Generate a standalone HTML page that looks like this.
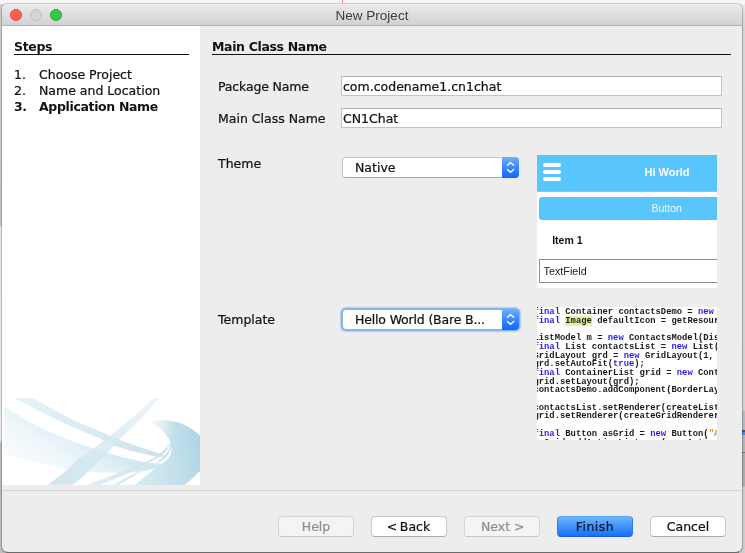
<!DOCTYPE html>
<html>
<head>
<meta charset="utf-8">
<title>New Project</title>
<style>
html,body{margin:0;padding:0;}
body{width:745px;height:553px;overflow:hidden;background:#f4f4f4;position:relative;
  font-family:"DejaVu Sans","Liberation Sans",sans-serif;font-size:12.5px;color:#111;}
.abs{position:absolute;}
#bgL{left:0;top:4px;width:6px;height:549px;background:linear-gradient(#d2d2d2 0,#cdcdcd 221px,#efefef 224px,#f0f0f0 436px,#c2c2c2 440px,#c2c2c2 100%);}
#bgR{left:739px;top:4px;width:6px;height:549px;background:linear-gradient(#ececec 0,#dadada 20px,#d6d6d6 406px,#b9bdc6 408px,#b9bdc6 426px,#555 426px,#555 428px,#4a8fe0 428px,#4a8fe0 431px,#b8b8b8 431px,#b8b8b8 448px,#777 448px,#777 449px,#b0b0b0 449px,#b0b0b0 482px,#d0d0d0 483px,#d0d0d0 100%);}
#bgT{left:0;top:0;width:745px;height:6px;background:#f6f6f6;}
#bgB{left:0;top:546px;width:745px;height:7px;background:linear-gradient(#7a7a7a 0,#7a7a7a 5.5px,#a8a8a8 7px);}
#win{left:2px;top:4px;width:739.7px;height:547.5px;border-radius:5px 5px 6px 6px;background:#ededed;
  box-shadow:0 0 0 1px rgba(0,0,0,.13),0 1px 3px rgba(0,0,0,.3);overflow:hidden;}
#tbar{left:2px;top:4px;width:739.7px;height:21px;border-radius:5px 5px 0 0;background:linear-gradient(#ebebeb,#d3d1d3);border-bottom:1px solid #b1afb1;}
#title{left:2px;top:4px;width:740px;height:22px;line-height:23px;text-align:center;
  font-family:"Liberation Sans",sans-serif;font-size:13.5px;color:#3d3d3d;}
.tl{width:12px;height:12px;border-radius:50%;top:9px;box-sizing:border-box;}
#left{left:2px;top:26px;width:198px;height:459px;background:#fff;overflow:hidden;}
.b{font-weight:bold;letter-spacing:-0.35px;}
.lbl{white-space:nowrap;line-height:16px;height:16px;}
.lbl,.tf,.combo,.btn{-webkit-text-stroke:0.22px currentColor;}
.lbl.b{-webkit-text-stroke:0;}
.hr{height:1px;background:#111;}
.tf{box-sizing:border-box;background:#fff;border:1px solid #c4c4c4;border-top-color:#b0b0b0;height:20px;line-height:19px;padding-left:1px;white-space:nowrap;}
.combo{box-sizing:border-box;height:21px;border-radius:4px;background:#fff;border:1px solid #c2c2c2;border-bottom-color:#a9a9a9;
  line-height:19px;padding-left:12px;white-space:nowrap;}
.combo .arrow{position:absolute;right:-1px;top:-1px;width:17px;height:21px;border-radius:0 4px 4px 0;
  background:linear-gradient(#6db1fc,#3d8dfb 45%,#0f68fb);}
.btn{box-sizing:border-box;width:76px;height:21px;top:516px;border-radius:4px;background:#fff;border:1px solid #c8c8c8;border-bottom-color:#acacac;
  text-align:center;line-height:20px;font-size:12.5px;white-space:nowrap;}
.btn.dis{background:#f4f4f4;border-color:#d6d6d6;border-bottom-color:#c6c6c6;color:#8e8e8e;}
.hb{left:5.6px;width:18.4px;height:3.8px;border-radius:2px;background:#fff;}
.pt{font-family:"Liberation Sans",sans-serif;white-space:nowrap;line-height:12px;}
.b2{font-weight:bold;}
#src{position:absolute;left:-3.55px;top:1.35px;margin:0;font-family:"Liberation Mono",monospace;font-size:8.85px;line-height:8.65px;font-weight:bold;color:#1a1a1a;letter-spacing:0;filter:blur(0.3px);}
#src i{font-style:normal;color:#2a1cf0;}
#src b{color:#e08a1a;}
#src u{text-decoration:none;background:#e8ee9e;}
</style>
</head>
<body>
<div id="bgT" class="abs"></div><div id="bgB" class="abs"></div><div id="bgL" class="abs"></div><div id="bgR" class="abs"></div>
<div class="abs" style="left:342px;top:0;width:1px;height:3px;background:#f08a8a;"></div>
<div id="win" class="abs"></div>
<div id="c" class="abs" style="left:0;top:0;width:745px;height:553px;will-change:transform;">
  <div id="tbar" class="abs"></div>
  <div id="title" class="abs">New Project</div>
  <div class="abs tl" style="left:10px;background:#fc605b;border:1px solid #e2463f;"></div>
  <div class="abs tl" style="left:30px;background:#d6d6d6;border:1px solid #bfbfbf;"></div>
  <div class="abs tl" style="left:50px;background:#34c84a;border:1px solid #24a732;"></div>

  <div id="left" class="abs"></div>
<svg class="abs" style="left:2px;top:395px" width="198" height="90" viewBox="2 395 198 90">
    <defs>
      <clipPath id="cp"><rect x="4" y="397.7" width="196" height="87.3"/></clipPath>
      <linearGradient id="gD" gradientUnits="userSpaceOnUse" x1="87" y1="470" x2="203" y2="455"><stop offset="0" stop-color="#deeef5"/><stop offset=".5" stop-color="#d3e8f1"/><stop offset=".75" stop-color="#c4e0ec"/><stop offset="1" stop-color="#aed4e6"/></linearGradient><radialGradient id="gT" gradientUnits="userSpaceOnUse" cx="149" cy="425" r="26"><stop offset="0" stop-color="#fff" stop-opacity=".95"/><stop offset=".4" stop-color="#fff" stop-opacity=".55"/><stop offset="1" stop-color="#fff" stop-opacity="0"/></radialGradient>
      <linearGradient id="gA" gradientUnits="userSpaceOnUse" x1="20" y1="475" x2="60" y2="415"><stop offset="0" stop-color="#cfe6f0" stop-opacity=".08"/><stop offset=".5" stop-color="#cfe6f0" stop-opacity=".32"/><stop offset=".8" stop-color="#cfe6f0" stop-opacity=".62"/><stop offset="1" stop-color="#cfe6f0" stop-opacity=".92"/></linearGradient>
      <linearGradient id="gB" gradientUnits="userSpaceOnUse" x1="14" y1="398" x2="157" y2="452"><stop offset="0" stop-color="#dcedf5" stop-opacity=".7"/><stop offset="1" stop-color="#c6e0ec" stop-opacity=".9"/></linearGradient>
      <linearGradient id="gC" gradientUnits="userSpaceOnUse" x1="157" y1="398" x2="55" y2="485"><stop offset="0" stop-color="#e2f0f6" stop-opacity=".7"/><stop offset="1" stop-color="#c9e2ed" stop-opacity=".9"/></linearGradient>
    </defs>
    <g clip-path="url(#cp)">
      <path fill="url(#gD)" d="M148.6,422 C155,420.5 162,420 167.7,420.6 C174,421.3 180,422.8 184.6,424.9 C190,427.5 195,431 200,435.4 C211,446 211,461 200,471 C195,476 190,480.5 184.8,485 L87.5,485 C98,481 108,477 117.7,473 C127,469.5 136,466 143.7,462.9 C148,460.8 152.5,458.5 156.4,455.9 C162,452 167,448 169,445.3 C171,442.5 170.5,441 169,439 C166.5,435.5 164,432 160.6,429 C157,426 153,424 148.6,422 Z"/>
      <circle cx="149" cy="425" r="26" fill="url(#gT)"/>
      <path fill="#fff" d="M100.3,484.7 C110,481 120,477 127.1,473.6 C135,470 142,466.5 148.6,462.9 C154,459.8 158.5,457.5 162,455.2 C165.5,452 168.3,448.5 169.8,445.3 L170.5,446.7 C169,450 166.5,453.5 163.4,456.6 C161,459 158.5,461.2 156.4,462.9 C150,467 142,471 134.6,473.6 C127,477 120,481 113.7,484.7 Z"/>
      <path fill="#fff" d="M119,484.7 C126,481 132,477.5 137.9,473.6 C145,470 151,466.8 156.4,463.6 C160.5,461.5 163.8,459.5 166.2,457.3 C168.5,454.5 170,451.5 170.9,448.1 L171.9,448.8 C171.5,452 170.5,455 169,457.3 C167,460 164.5,462 162,463.6 C157.5,467 153,470.5 148.6,473.6 C144,477.5 139.5,481 135.2,484.7 Z"/>
      <path fill="url(#gA)" d="M4,406.8 C15,413 26,420 36.2,425.7 C48,431.5 60,436.5 72.3,441.1 C82,445 92,448.5 104.3,452 C116,455.5 128,458.8 140.5,461.5 C147,462.6 154,463.3 166,464 C158,468 150,470.5 140.5,471.5 C132,472.8 125,473 117.7,472.9 C107,472.8 97,472.3 86.8,471.5 C78,470.5 69,469.2 60,467.5 C42,464 22,459 4,454.7 Z"/>
      <path fill="url(#gB)" d="M14.5,397.7 L32.5,397.7 C43,403.5 53,409.5 63.3,414.9 C75,421 87,426.3 100,431.2 C108,434.8 116,438.3 124,441.4 C135,445.5 148,449.5 158,453 C162,454.5 165,455.8 167.5,457 C161,456.8 155,456.2 150,455.2 C135,452 122,448.5 110,444.2 C106.5,442.5 103,440.5 100,438.4 C84,432 69,425.5 54.2,418.5 C41,412 27,405 14.5,397.7 Z"/>
      <path fill="url(#gC)" d="M154.1,397.7 L159.6,397.7 C147,412.5 133,427.5 119,440 C115,445 111,449.5 107,453.4 C101.5,459 96,464.5 90.9,468.9 C85,474.5 79,479.8 72.8,484.7 L47.9,484.7 C52,481.8 56,478.8 60,475.6 C66,471 72,465.5 77.4,460 C83.5,456 89,452.2 94.9,448 C98,445.5 101.5,442.8 104.3,440 C122,427 138,413 154.1,397.7 Z"/>
    </g>
  </svg>

  <div class="abs lbl b" style="left:14px;top:39px;">Steps</div>
  <div class="abs hr" style="left:14px;top:54px;width:175px;"></div>
  <div class="abs lbl" style="left:14px;top:67px;">1.</div><div class="abs lbl" style="left:39px;top:67px;">Choose Project</div>
  <div class="abs lbl" style="left:14px;top:83px;">2.</div><div class="abs lbl" style="left:39px;top:83px;">Name and Location</div>
  <div class="abs lbl b" style="left:14px;top:99px;">3.</div><div class="abs lbl b" style="left:39px;top:99px;">Application Name</div>

  <div class="abs lbl b" style="left:212px;top:39px;">Main Class Name</div>
  <div class="abs hr" style="left:212px;top:54px;width:519px;"></div>

  <div class="abs lbl" style="left:218px;top:79px;letter-spacing:-.15px;">Package Name</div>
  <div class="abs tf" style="left:341px;top:76px;width:381px;">com.codename1.cn1chat</div>
  <div class="abs lbl" style="left:218px;top:111px;">Main Class Name</div>
  <div class="abs tf" style="left:341px;top:108px;width:381px;">CN1Chat</div>

  <div class="abs lbl" style="left:218px;top:156px;">Theme</div>
  <div class="abs combo" style="left:342px;top:157px;width:177px;">Native<div class="arrow"><svg width="17" height="21" viewBox="0 0 17 21" style="display:block"><path d="M5.4 8.3 L8.5 5.5 L11.7 8.3 M5.4 12.5 L8.5 15.3 L11.7 12.5" fill="none" stroke="#fff" stroke-width="1.35" stroke-linecap="round" stroke-linejoin="round"/></svg></div></div>

  <div class="abs lbl" style="left:218px;top:312px;">Template</div>
  <div class="abs combo" style="left:342px;top:309px;width:177px;border-color:#86b4ec;box-shadow:0 0 0 1px #86b4ec,0 0 1px 2px rgba(134,180,236,.55);letter-spacing:-.17px;">Hello World (Bare B...<div class="arrow"><svg width="17" height="21" viewBox="0 0 17 21" style="display:block"><path d="M5.4 8.3 L8.5 5.5 L11.7 8.3 M5.4 12.5 L8.5 15.3 L11.7 12.5" fill="none" stroke="#fff" stroke-width="1.35" stroke-linecap="round" stroke-linejoin="round"/></svg></div></div>

  <div class="abs" id="prev" style="left:537px;top:155px;width:180px;height:132.5px;background:#fff;overflow:hidden;">
    <div class="abs" style="left:0;top:0;width:180px;height:35.5px;background:#58c6fc;border-bottom:1px solid #c3b5aa;"></div>
    <div class="abs hb" style="top:8.2px;"></div><div class="abs hb" style="top:15.2px;"></div><div class="abs hb" style="top:22px;"></div>
    <div class="abs pt b2" style="left:107.5px;top:10.9px;font-size:11px;color:#fff;">Hi World</div>
    <div class="abs" style="left:2.2px;top:41.8px;width:190px;height:23px;border-radius:3px;background:#58c6fc;"></div>
    <div class="abs pt" style="left:114.5px;top:47px;font-size:10.5px;color:#f2fbff;">Button</div>
    <div class="abs pt b2" style="left:15.2px;top:79px;font-size:10.5px;color:#111;">Item 1</div>
    <div class="abs" style="left:2.2px;top:104.3px;width:190px;height:23.5px;box-sizing:border-box;border:1px solid #8e8e8e;background:#fff;"></div>
    <div class="abs pt" style="left:6.5px;top:110.4px;font-size:10.8px;color:#222;">TextField</div>
  </div>
  <div class="abs" id="code" style="left:537px;top:307px;width:180px;height:132.5px;background:#fff;overflow:hidden;">
<pre id="src"><i>final</i> Container contactsDemo = <i>new</i> Container(<i>new</i> BorderLayout());
<i>final</i> <u>Image</u> defaultIcon = getResources().getImage("stock_new-meeting.png");

ListModel m = <i>new</i> ContactsModel(Display.getInstance().getAllContacts(<i>true</i>));
<i>final</i> List contactsList = <i>new</i> List(m);
GridLayout grd = <i>new</i> GridLayout(1, 1);
grd.setAutoFit(<i>true</i>);
<i>final</i> ContainerList grid = <i>new</i> ContainerList(m);
grid.setLayout(grd);
contactsDemo.addComponent(BorderLayout.CENTER, contactsList);

contactsList.setRenderer(createListRenderer());
grid.setRenderer(createGridRenderer());

<i>final</i> Button asGrid = <i>new</i> Button(<b>"As Grid"</b>);
<span style="position:relative;top:1.2px">asGrid.addActionListener(<i>new</i> ActionListener() {</span>
    <i>public void</i> actionPerformed(ActionEvent evt) {</pre>
  </div>

  <div class="abs" style="left:2px;top:490px;width:740px;height:1px;background:#d3d3d3;"></div>

  <div class="abs btn dis" style="left:278px;">Help</div>
  <div class="abs btn" style="left:371px;"><span style="letter-spacing:-1.5px;margin-left:-1px">&lt;</span> Back</div>
  <div class="abs btn dis" style="left:464px;">Next <span style="letter-spacing:-1.5px;">&gt;</span></div>
  <div class="abs btn" style="left:557px;background:linear-gradient(#6db5fc,#3f92fb 50%,#1870fb);border-color:#58a4f8 #2a7cf4 #145ee8;color:#0b1830;letter-spacing:.45px;">Finish</div>
  <div class="abs btn" style="left:650px;">Cancel</div>
</div>
</body>
</html>
